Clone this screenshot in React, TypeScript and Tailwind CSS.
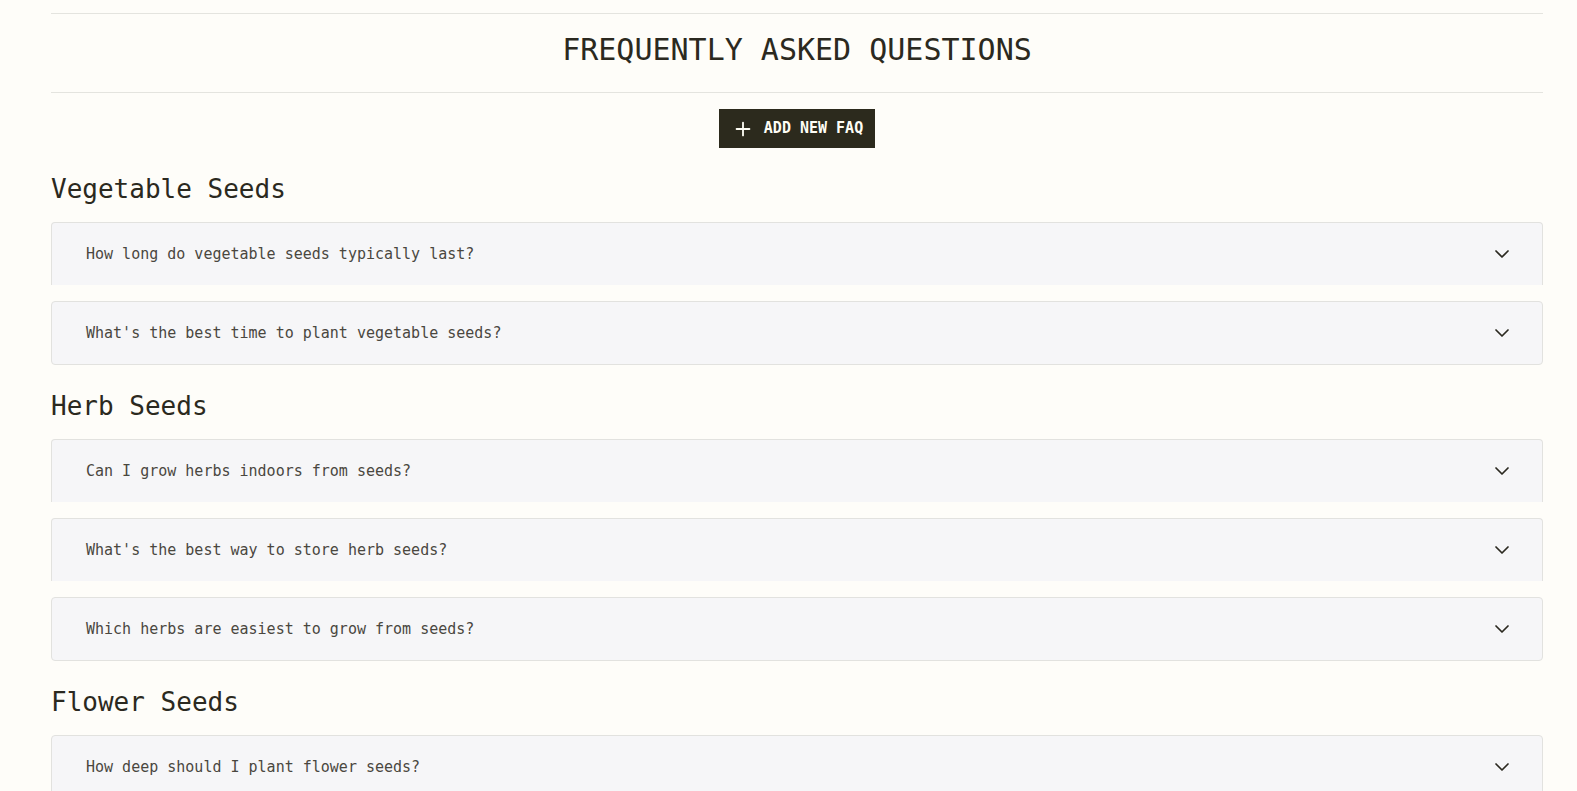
import { ChevronDown, Plus } from 'lucide-react';

type Category = {
  title: string;
  questions: string[];
};

const categories: Category[] = [
  {
    title: 'Vegetable Seeds',
    questions: [
      'How long do vegetable seeds typically last?',
      "What's the best time to plant vegetable seeds?",
    ],
  },
  {
    title: 'Herb Seeds',
    questions: [
      'Can I grow herbs indoors from seeds?',
      "What's the best way to store herb seeds?",
      'Which herbs are easiest to grow from seeds?',
    ],
  },
  {
    title: 'Flower Seeds',
    questions: ['How deep should I plant flower seeds?'],
  },
];

function FaqItem({ question, last }: { question: string; last: boolean }) {
  return (
    <div
      className={
        last
          ? 'border border-[#e2e2df] bg-[#f6f6f8] rounded'
          : 'border border-b-0 border-[#e2e2df] bg-[#f6f6f8] rounded-t'
      }
    >
      <button className="w-full h-[62px] flex items-center justify-between pl-[34px] pr-[28px] text-left">
        <span className="text-[15px] text-[#4a473f]">{question}</span>
        <ChevronDown size={24} strokeWidth={1.75} className="text-[#2b2920]" />
      </button>
    </div>
  );
}

export default function App() {
  return (
    <div
      className="min-h-screen bg-[#fefdf9] text-[#2b2920] pt-[13px] pb-12"
      style={{ fontFamily: '"DejaVu Sans Mono", "Liberation Mono", monospace' }}
    >
      <div className="ml-[51px] mr-[34px]">
        {/* header */}
        <div className="border-t border-b border-[#e4e4df] pt-[18px] pb-[24px]">
          <h1 className="text-center text-[30px] leading-[36px]">FREQUENTLY ASKED QUESTIONS</h1>
        </div>

        <div className="flex justify-center mt-4">
          <button className="h-[39px] flex items-center gap-[10px] pl-[13px] pr-[12px] bg-[#2c2a1d] text-[#fefdf5]">
            <Plus size={22} strokeWidth={2} />
            <span className="text-[15px] font-bold">ADD NEW FAQ</span>
          </button>
        </div>

        {categories.map((cat) => (
          <section key={cat.title} className="mt-[26px]">
            <h2 className="text-[26px] leading-[30px] mb-[18px]">{cat.title}</h2>
            <div className="flex flex-col gap-4">
              {cat.questions.map((q, i) => (
                <FaqItem key={q} question={q} last={i === cat.questions.length - 1} />
              ))}
            </div>
          </section>
        ))}
      </div>
    </div>
  );
}
